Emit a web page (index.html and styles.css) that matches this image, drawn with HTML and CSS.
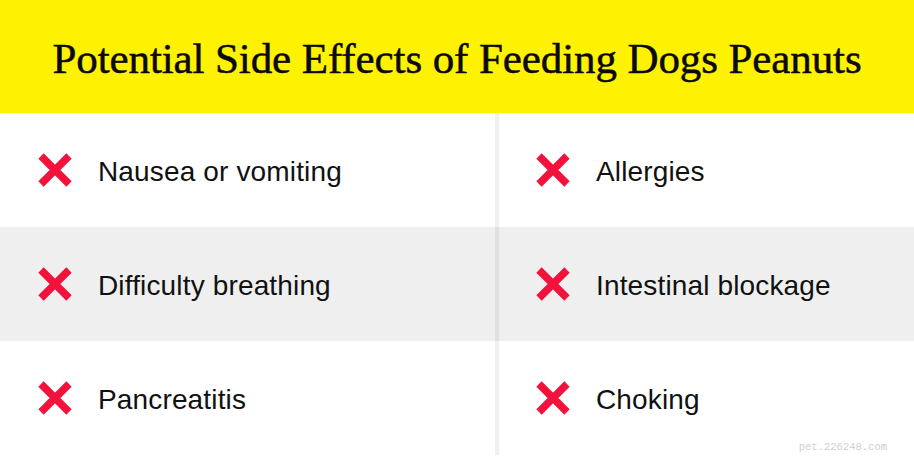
FILE: index.html
```html
<!DOCTYPE html>
<html lang="en">
<head>
<meta charset="utf-8">
<title>Potential Side Effects of Feeding Dogs Peanuts</title>
<link rel="stylesheet" href="styles.css">
</head>
<body>
<div class="card">
  <header class="banner">
    <h1 class="title">Potential Side Effects of Feeding Dogs Peanuts</h1>
  </header>
  <div class="rows">
    <div class="row">
      <div class="cell"><svg class="x" viewBox="0 0 36 36"><path d="M4 4 L32 32 M32 4 L4 32"/></svg><span class="label">Nausea or vomiting</span></div>
      <div class="cell cell-right"><svg class="x" viewBox="0 0 36 36"><path d="M4 4 L32 32 M32 4 L4 32"/></svg><span class="label">Allergies</span></div>
    </div>
    <div class="row row-alt">
      <div class="cell"><svg class="x" viewBox="0 0 36 36"><path d="M4 4 L32 32 M32 4 L4 32"/></svg><span class="label">Difficulty breathing</span></div>
      <div class="cell cell-right"><svg class="x" viewBox="0 0 36 36"><path d="M4 4 L32 32 M32 4 L4 32"/></svg><span class="label">Intestinal blockage</span></div>
    </div>
    <div class="row">
      <div class="cell"><svg class="x" viewBox="0 0 36 36"><path d="M4 4 L32 32 M32 4 L4 32"/></svg><span class="label">Pancreatitis</span></div>
      <div class="cell cell-right"><svg class="x" viewBox="0 0 36 36"><path d="M4 4 L32 32 M32 4 L4 32"/></svg><span class="label">Choking</span></div>
    </div>
  </div>
  <span class="watermark">pet.226248.com</span>
</div>
</body>
</html>
```
FILE: styles.css
```css
* { box-sizing: border-box; }
html, body { margin: 0; padding: 0; background: #ffffff; }
.card {
  position: relative;
  width: 914px;
  height: 456px;
  overflow: hidden;
  display: flex;
  flex-direction: column;
}
.banner {
  height: 113px;
  background: #fff200;
  display: flex;
  align-items: center;
  justify-content: center;
}
.title {
  margin: 0;
  font-family: "Liberation Serif", "DejaVu Serif", serif;
  font-weight: normal;
  font-size: 43px;
  color: #0a0a0a;
  white-space: nowrap;
  -webkit-text-stroke: 0.5px #0a0a0a;
  letter-spacing: -0.1px;
  padding-top: 4px;
}
.rows { flex: 1; display: flex; flex-direction: column; }
.row {
  height: 114px;
  display: grid;
  grid-template-columns: 495px 1fr;
}
.row-alt { background: #efefef; }
.cell {
  display: flex;
  align-items: center;
  gap: 25px;
  padding-left: 37px;
}
.cell-right {
  border-left: 4px solid rgba(0, 0, 0, 0.06);
  padding-left: 36px;
}
.x { width: 36px; height: 36px; flex: none; }
.x path { stroke: #f2123c; stroke-width: 7.5; fill: none; }
.label {
  font-family: "Liberation Sans", Arial, sans-serif;
  font-size: 28px;
  letter-spacing: 0.15px;
  color: #111111;
  padding-top: 3px;
}
.watermark {
  position: absolute;
  right: 27px;
  bottom: 3px;
  font-family: "Liberation Mono", monospace;
  font-size: 10.5px;
  color: #cfcfcf;
}
```
